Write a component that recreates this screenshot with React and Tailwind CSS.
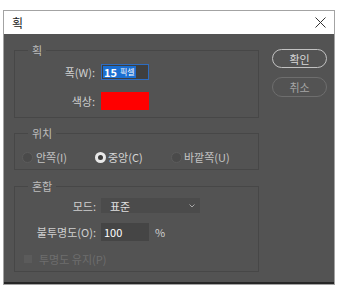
export default function App() {
  const font = "font-['Noto_Sans_CJK_KR','Noto_Sans',sans-serif]";
  return (
    <div className={`bg-white w-[337px] h-[289px] pt-[10px] pl-[3px] ${font}`}>
      <div className="w-[332px] h-[275px] border border-[#a3a3a3] flex flex-col">
        <div className="h-[23px] bg-white flex items-center justify-between pl-[8px] pr-[8px] shrink-0">
          <span className="text-[12px] leading-[14px] text-[#1a1a1a]">획</span>
          <svg width="11" height="11" viewBox="0 0 11 11">
            <path d="M0.5 0.5 L10.5 10.5 M10.5 0.5 L0.5 10.5" stroke="#333" strokeWidth="1" />
          </svg>
        </div>
        <div className="flex-1 bg-[#535353] border-b-2 border-[#262626] flex items-start pt-[8px] pl-[10px]">
          <div className="w-[245px] flex flex-col">
            <fieldset className="border border-[#474747] pt-[6px] pb-[7px] flex flex-col gap-[12px]">
              <legend className="ml-[13px] px-[4px] text-[11px] leading-[16px] text-[#bdbdbd]">획</legend>
              <div className="flex items-center h-[16px]">
                <span className="w-[80px] text-right text-[11px] leading-[14px] text-[#cfcfcf]">폭(W):</span>
                <div className="ml-[6px] w-[48px] h-[16px] border border-[#2d6cc0] bg-[#3f3f3f] flex items-center pl-[1px]">
                  <span className="bg-[#1c6fd1] text-white h-[12px] px-[1px] flex items-center gap-[3px]">
                    <span className="text-[11px] leading-[12px] font-bold">15</span>
                    <span className="text-[8px] leading-[12px]">픽셀</span>
                  </span>
                </div>
              </div>
              <div className="flex items-center h-[18px]">
                <span className="w-[80px] text-right text-[11px] leading-[14px] text-[#cfcfcf]">색상:</span>
                <div className="ml-[6px] w-[48px] h-[18px] bg-[#ff0000]"></div>
              </div>
            </fieldset>
            <fieldset className="mt-[7px] border border-[#474747] pt-[8px] pb-[4px]">
              <legend className="ml-[13px] px-[4px] text-[11px] leading-[16px] text-[#bdbdbd]">위치</legend>
              <div className="flex items-center h-[16px] pl-[7px]">
                <div className="w-[73px] flex items-center">
                  <span className="w-[11px] h-[11px] rounded-full bg-[#4a4a4a] border border-[#5c5c5c]"></span>
                  <span className="ml-[3px] text-[11px] leading-[14px] text-[#c4c4c4]">안쪽(I)</span>
                </div>
                <div className="w-[76px] flex items-center">
                  <span className="w-[11px] h-[11px] rounded-full bg-[#e8e8e8] flex items-center justify-center">
                    <span className="w-[5px] h-[5px] rounded-full bg-[#3a3a3a]"></span>
                  </span>
                  <span className="ml-[2px] text-[11px] leading-[14px] text-[#d6d6d6]">중앙(C)</span>
                </div>
                <div className="flex items-center">
                  <span className="w-[11px] h-[11px] rounded-full bg-[#4a4a4a] border border-[#5c5c5c]"></span>
                  <span className="ml-[2px] text-[11px] leading-[14px] text-[#c4c4c4]">바깥쪽(U)</span>
                </div>
              </div>
            </fieldset>
            <fieldset className="mt-[8px] border border-[#474747] pt-[4px] pb-[4px] flex flex-col">
              <legend className="ml-[13px] px-[4px] text-[11px] leading-[16px] text-[#bdbdbd]">혼합</legend>
              <div className="flex items-center h-[15px]">
                <span className="w-[81px] text-right text-[11px] leading-[14px] text-[#cfcfcf]">모드:</span>
                <div className="ml-[5px] w-[99px] h-[15px] bg-[#4b4b4b] flex items-center justify-between pl-[9px] pr-[5px]">
                  <span className="text-[11px] leading-[14px] text-[#e0e0e0]">표준</span>
                  <svg width="6" height="4" viewBox="0 0 6 4">
                    <path d="M0.5 0.5 L3 3 L5.5 0.5" stroke="#a8a8a8" strokeWidth="1" fill="none" />
                  </svg>
                </div>
              </div>
              <div className="flex items-center h-[18px] mt-[10px]">
                <span className="w-[81px] text-right text-[11px] leading-[14px] text-[#cfcfcf]">불투명도(O):</span>
                <div className="ml-[5px] w-[48px] h-[18px] bg-[#454545] flex items-center pl-[3px]">
                  <span className="text-[11px] leading-[14px] text-white">100</span>
                </div>
                <span className="ml-[6px] text-[11px] leading-[14px] text-[#cfcfcf]">%</span>
              </div>
              <div className="flex items-center h-[16px] mt-[10px] pl-[9px]">
                <span className="w-[8px] h-[8px] bg-[#5b5b5b]"></span>
                <span className="ml-[7px] text-[11px] leading-[14px] text-[#6e6e6e]">투명도 유지(P)</span>
              </div>
            </fieldset>
          </div>
          <div className="ml-[13px] mt-[7px] flex flex-col">
            <div className="w-[55px] h-[19px] rounded-full border-[1.5px] border-[#c2c2c2] flex items-center justify-center text-[11px] leading-[14px] text-[#d8d8d8]">
              확인
            </div>
            <div className="mt-[9px] w-[55px] h-[20px] rounded-full border border-[#6e6e6e] flex items-center justify-center text-[11px] leading-[14px] text-[#a6a6a6]">
              취소
            </div>
          </div>
        </div>
      </div>
    </div>
  );
}
